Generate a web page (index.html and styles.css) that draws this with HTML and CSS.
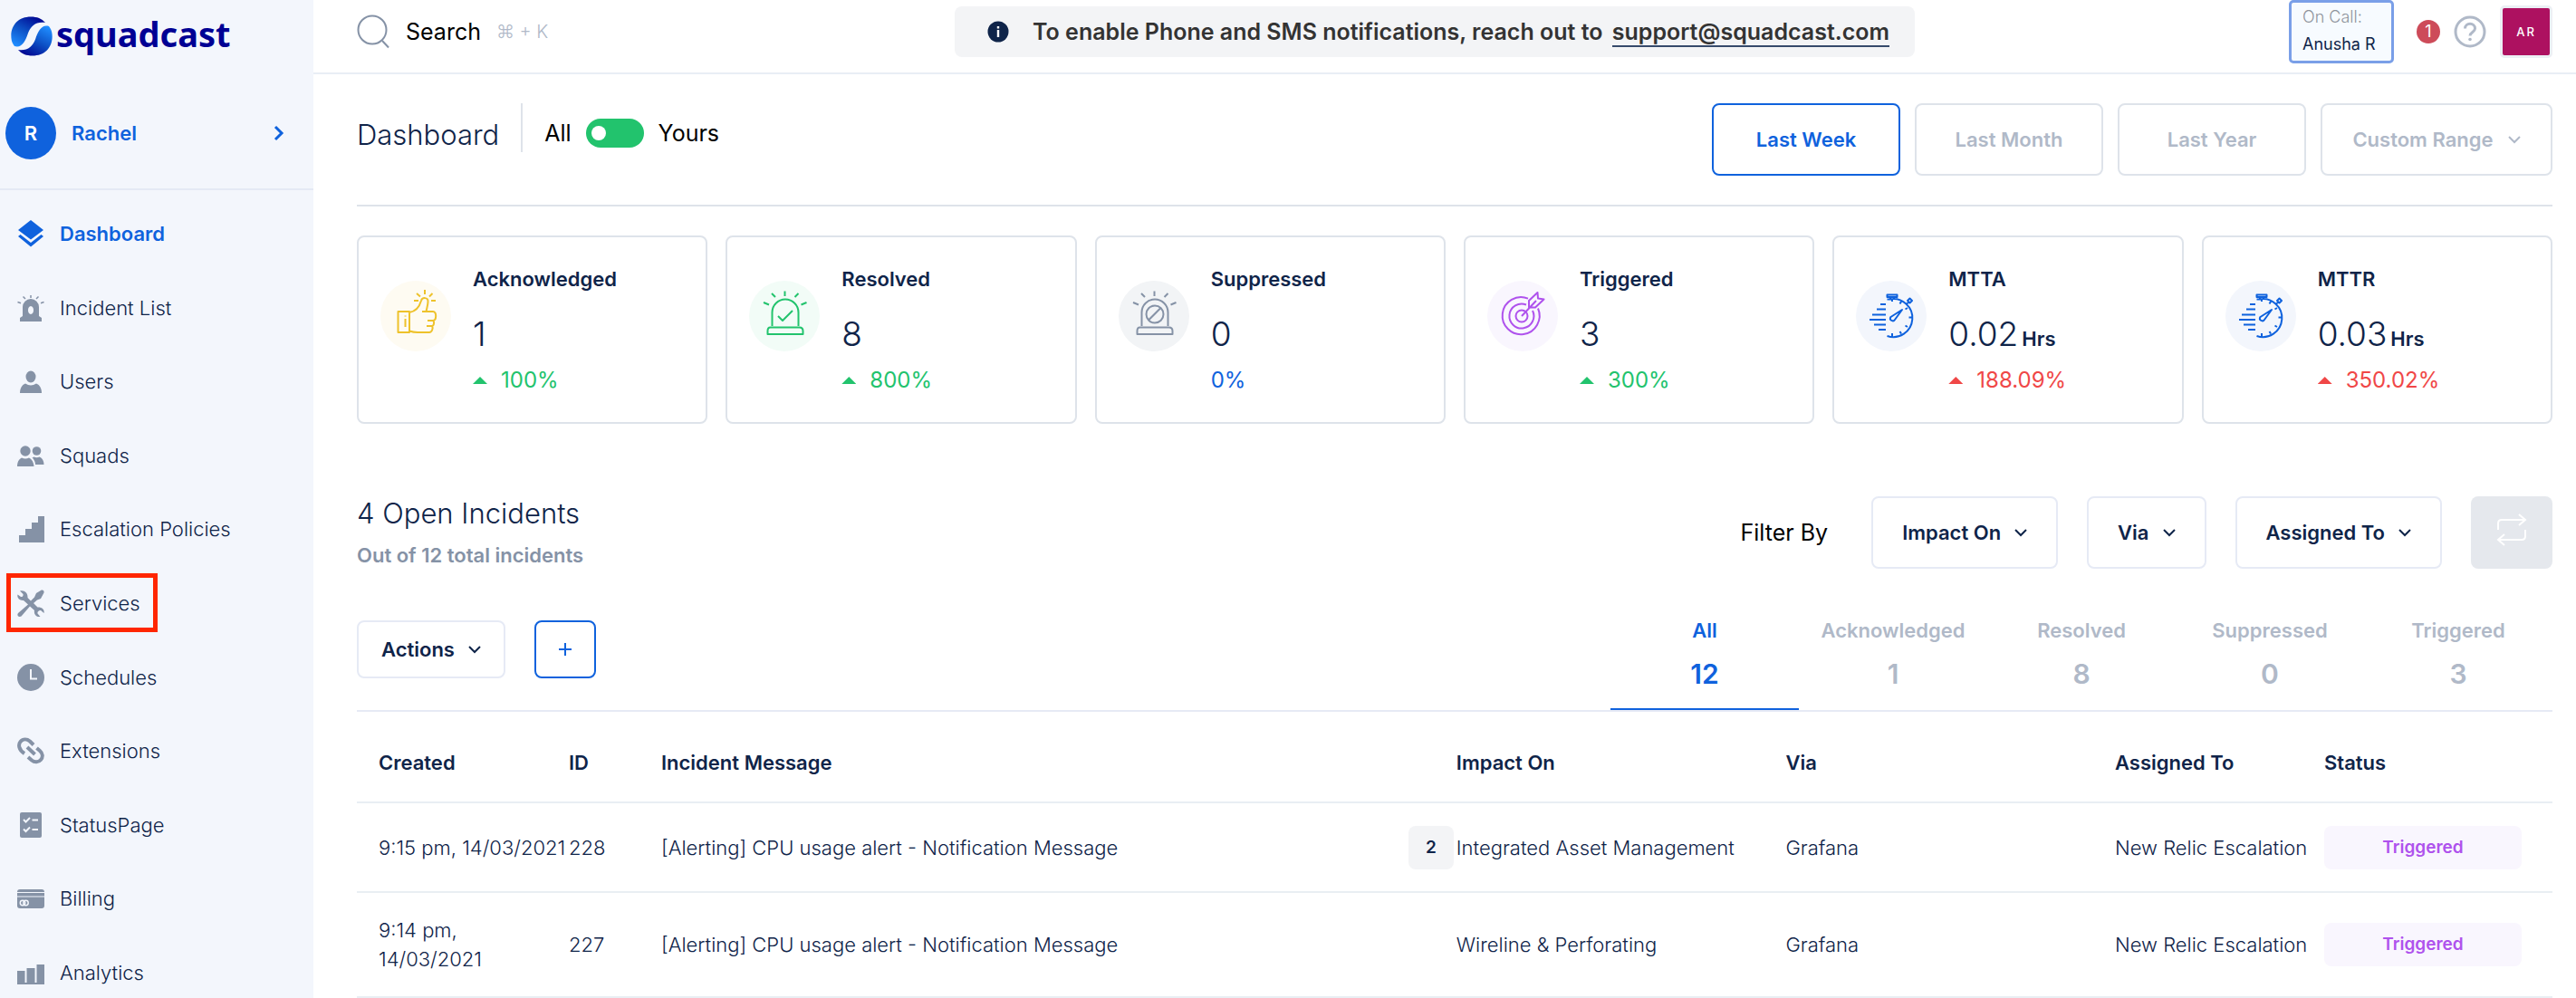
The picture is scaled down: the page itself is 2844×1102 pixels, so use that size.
FILE: index.html
```html
<!DOCTYPE html>
<html lang="en">
<head>
<meta charset="utf-8">
<meta name="viewport" content="width=device-width, initial-scale=1">
<title>Squadcast Dashboard</title>
<link rel="stylesheet" href="styles.css">
</head>
<body>
<svg class="sprite" aria-hidden="true">
  <symbol id="chevron-down" viewBox="0 0 14 10"><path d="M1 2l6 6 6-6" fill="none" stroke="currentColor" stroke-width="2"/></symbol>
  <symbol id="siren-rays" viewBox="0 0 78 78"><path d="M39.500 11.500V17M25 14l4 4M54.500 14l-4 4M16 24l6 2.500M63.500 24l-6 2.500M25.500 50V35a14.500 14.500 0 0 1 29 0v15M23.500 51.500h32q4 0 4 4V59h-39v-3.500q0-4 3-4z"/></symbol>
  <symbol id="stopwatch" viewBox="0 0 78 78"><path d="M34.500 20.500h3a21 21 0 1 1-3 40.500M34.500 15.500h11v2.500h-11zM38 18v2.500M42 18v2.500M40 20v3M50 23l-1.500 2.500M57 30l-2.500 1.500M62 40.500h-3.500M57 51l-2.500-1.500M50 58.500L48.500 56M40 61.500V58M56 25.500l2-1.500M59.500 19.500l2.500 2.500-2.500 2.500-2.500-2.500zM27 26h6M23 31.500h10M18 37.500h15M15 43h18M20 48.500h13M25 54h8M51 32l-8 11c-2 3-7 0-4.500-3z"/></symbol>
</svg>
<div class="app">
  <aside class="sidebar">
    <a class="brand" href="#">
      <svg width="46" height="44" viewBox="0 0 46 43" aria-hidden="true">
        <defs>
          <linearGradient id="ball" x1="0.8" y1="0" x2="0.2" y2="1"><stop offset="0" stop-color="#00038f"/><stop offset=".5" stop-color="#0c4fc4"/><stop offset="1" stop-color="#1f8dff"/></linearGradient>
        </defs>
        <path fill="url(#ball)" d="M.5 24C-1 10 8 0 22 0c7 0 12 2 16 6.500C28 5 22 10 19 18c-3 9-7 17-15 14.500C2 30 .7 27 .5 24z"/>
        <path fill="url(#ball)" transform="rotate(180 23 21.500)" d="M.5 24C-1 10 8 0 22 0c7 0 12 2 16 6.500C28 5 22 10 19 18c-3 9-7 17-15 14.500C2 30 .7 27 .5 24z"/>
      </svg>
      <span>squadcast</span>
    </a>
    <button class="profile" type="button">
      <span class="profile-avatar">R</span>
      <span class="profile-name">Rachel</span>
      <svg width="12" height="18" viewBox="0 0 12 18" aria-hidden="true"><path d="M2 2l7 7-7 7" fill="none" stroke="currentColor" stroke-width="3"/></svg>
    </button>
    <nav class="nav">
      <ul>
        <li><a class="is-active" href="#"><svg viewBox="0 0 30 30"><path d="M15 0l14 11-14 10.500L1 11zM1 18l2.500-2L15 25l11.500-9 2.500 2-14 11.500z"/></svg>Dashboard</a></li>
        <li><a href="#"><svg viewBox="0 0 30 30"><path fill-rule="evenodd" d="M3 30v-4l3-2V14a9 9 0 0 1 18 0v10l3 2v4zM15 13c-4 0-4 9 0 9s4-9 0-9z"/><path class="line" d="M15 1v3M6.500 2.500l2.500 2.500M23.500 2.500L21 5M.5 8.500l3.500 1.300M29.500 8.500L26 9.800"/></svg>Incident List</a></li>
        <li><a href="#"><svg viewBox="0 0 30 30"><ellipse cx="15" cy="10" rx="5.500" ry="6.500"/><path d="M3 28c0-5 2-9 6-10.500 4 2.500 8 2.500 12 0 4 1.500 6 5.500 6 10.500z"/></svg>Users</a></li>
        <li><a href="#"><svg viewBox="0 0 30 30"><circle cx="9" cy="10" r="5.700"/><circle cx="21.500" cy="10" r="4.800"/><path d="M0 27c0-5 2-8 5-9.500q4 2 8 0c3 1.500 5 4.500 5.500 9.500zM16.500 17.500l2-1q3 1.500 6 0c3 1 5 4.500 5 8.500H20c0-3-1.500-6-3.500-7.500z"/></svg>Squads</a></li>
        <li><a href="#"><svg viewBox="0 0 30 30"><path d="M2 30v-8h7v-7h7V8h7V1h7v29z"/></svg>Escalation Policies</a></li>
        <li class="is-marked"><a href="#"><svg viewBox="0 0 30 30"><path d="M3 1.500l3.500 3.500c.5 2-1 3.500-2.500 3L.5 5.500C-.5 9 2.500 12.500 7 12l5 4.500L1 26c-2 3 1 5 3.500 3.500L14 18.500l5 4.500c-1 4.500 2.500 8 6.500 7l-3-3.500c-.5-2 1.500-4 3.500-3.500l3.500 3c1-4-2.500-7-7-6.500L18 15l4-3.500 4-1.500 3.500-6.500C30 1 28 0 26 1l-5 3-2 4.500-4 4L11.500 9C12 4 8 0 3 1.500z"/></svg>Services</a></li>
        <li><a href="#"><svg viewBox="0 0 30 30"><circle cx="15" cy="15" r="15"/><path d="M15 6v10.500h7" fill="none" stroke="#f3f6fc" stroke-width="2"/></svg>Schedules</a></li>
        <li><a href="#"><svg viewBox="0 0 30 30"><path class="chain" d="M8 18C1.500 14 1 8 3.500 5c3-3.500 7.500-3 10.500-.5l4 4M11 11l8.500 8M12 22l4 3.500c3 2.500 7.500 2.500 10-.5s2.500-7-1-10l-3.500-3"/></svg>Extensions</a></li>
        <li><a href="#"><svg viewBox="0 0 30 30"><rect x="3" y="1" width="24" height="28" rx="2"/><path d="M7 9l2.500 2.500L14 7M16.500 9.500H23M7 19.500L9.500 22l4.500-4.500M16.500 20H23" fill="none" stroke="#f3f6fc" stroke-width="2"/></svg>StatusPage</a></li>
        <li><a href="#"><svg viewBox="0 0 30 30"><rect y="5" width="30" height="21" rx="3"/><path d="M0 8.500h30M0 13h30" stroke="#f3f6fc"/><g fill="none" stroke="#f3f6fc" stroke-width="1.500"><circle cx="6" cy="20" r="2.700"/><circle cx="9.500" cy="20" r="2.700"/></g></svg>Billing</a></li>
        <li><a href="#"><svg viewBox="0 0 30 30"><path d="M0 13h8.500v13h2V10h9v16h2V6H30v22H0z"/></svg>Analytics</a></li>
      </ul>
    </nav>
  </aside>

  <div class="page">
    <header class="topbar">
      <button class="search" type="button">
        <svg width="37" height="38" viewBox="0 0 37 38" aria-hidden="true"><circle cx="17" cy="17" r="15.500" fill="none" stroke="#8592a6" stroke-width="2"/><path d="M28 29l7 7.500" stroke="#8592a6" stroke-width="2"/></svg>
        <span>Search</span>
        <kbd>⌘ + K</kbd>
      </button>
      <div class="notice">
        <svg width="24" height="24" viewBox="0 0 24 24" aria-hidden="true"><circle cx="12" cy="12" r="11.500" fill="#0f2449"/><path d="M12 10v8M12 6v2.500" stroke="#fff" stroke-width="2.400"/></svg>
        <p>To enable Phone and SMS notifications, reach out to <a href="#">support@squadcast.com</a></p>
      </div>
      <div class="account">
        <div class="oncall"><span>On Call:</span><strong>Anusha R</strong></div>
        <span class="count">1</span>
        <button class="help" type="button" aria-label="Help"><svg width="36" height="36" viewBox="0 0 36 36" aria-hidden="true"><g fill="none" stroke="#b0b9c8" stroke-width="3"><circle cx="18" cy="18" r="16"/><path d="M12.500 14.500c0-7 11-7 11 0 0 4-5.500 4-5.500 8"/></g><circle cx="18" cy="26.500" r="1.800" fill="#b0b9c8"/></svg></button>
        <button class="user" type="button">AR</button>
      </div>
    </header>

    <main class="main">
      <section class="heading">
        <div class="heading-left">
          <h1>Dashboard</h1>
          <span class="rule"></span>
          <div class="scope"><span>All</span><input id="scope" class="switch" type="checkbox"><label for="scope">Yours</label></div>
        </div>
        <div class="ranges">
          <button class="range is-active" type="button">Last Week</button>
          <button class="range" type="button">Last Month</button>
          <button class="range" type="button">Last Year</button>
          <button class="range range-custom" type="button">Custom Range <svg class="chev"><use href="#chevron-down"/></svg></button>
        </div>
      </section>

      <section class="stats">
        <article class="stat">
          <svg class="stat-icon yellow" viewBox="0 0 78 78"><circle class="disc" cx="39" cy="39" r="39"/><path d="M49 10v5M40 14l4 3.500M57.500 14L54 17.500M37 22h5M56 22h5M19.500 34H32v23H19.500zM27.500 42v9M27.500 38.500v1M32 35c6-1 11-6 13-13 1-4 8-4 7.500 1 0 4-1.500 8-2 11M46 34h12c4.500 0 4 10 0 10h-6M58 44c2 1 1 6-1 6h-6M57 50c1.500 2 0 7-3 7H41c-4 0-6-.5-9-1.500"/></svg>
          <div><h2>Acknowledged</h2><p class="value">1</p><p class="trend good"><i></i>100%</p></div>
        </article>
        <article class="stat">
          <svg class="stat-icon green" viewBox="0 0 78 78"><circle class="disc" cx="39" cy="39" r="39"/><use href="#siren-rays"/><path d="M32 39l5 5 11-11"/></svg>
          <div><h2>Resolved</h2><p class="value">8</p><p class="trend good"><i></i>800%</p></div>
        </article>
        <article class="stat">
          <svg class="stat-icon grey" viewBox="0 0 78 78"><circle class="disc" cx="39" cy="39" r="39"/><use href="#siren-rays"/><circle cx="40" cy="37" r="9.500"/><path d="M33 43.500L46.500 30"/></svg>
          <div><h2>Suppressed</h2><p class="value">0</p><p class="trend flat">0%</p></div>
        </article>
        <article class="stat">
          <svg class="stat-icon purple" viewBox="0 0 78 78"><circle class="disc" cx="39" cy="39" r="39"/><circle cx="38" cy="39" r="6.500"/><path d="M45 19.700A20.500 20.500 0 1 0 56 30.500M43 26.500A13.500 13.500 0 1 0 50 33M38 39l16-17M46 29.500V22l9.500-9 .5 6.500 6.500 1L53 29.500z"/></svg>
          <div><h2>Triggered</h2><p class="value">3</p><p class="trend good"><i></i>300%</p></div>
        </article>
        <article class="stat">
          <svg class="stat-icon blue" viewBox="0 0 78 78"><circle class="disc" cx="39" cy="39" r="39"/><use href="#stopwatch"/></svg>
          <div><h2>MTTA</h2><p class="value">0.02<small>Hrs</small></p><p class="trend bad"><i></i>188.09%</p></div>
        </article>
        <article class="stat">
          <svg class="stat-icon blue" viewBox="0 0 78 78"><circle class="disc" cx="39" cy="39" r="39"/><use href="#stopwatch"/></svg>
          <div><h2>MTTR</h2><p class="value">0.03<small>Hrs</small></p><p class="trend bad"><i></i>350.02%</p></div>
        </article>
      </section>

      <section class="incidents">
        <div class="incidents-head">
          <div>
            <h2>4 Open Incidents</h2>
            <p>Out of 12 total incidents</p>
          </div>
          <div class="filters">
            <span>Filter By</span>
            <button class="filter" type="button">Impact On <svg class="chev"><use href="#chevron-down"/></svg></button>
            <button class="filter" type="button">Via <svg class="chev"><use href="#chevron-down"/></svg></button>
            <button class="filter" type="button">Assigned To <svg class="chev"><use href="#chevron-down"/></svg></button>
            <button class="reset" type="button" aria-label="Reset filters"><svg width="34" height="38" viewBox="0 0 34 38" aria-hidden="true"><path d="M2 19v-7q0-4 4-4h26M25 2l7 6-7 6M32 19v7q0 4-4 4H2M9 24l-7 6 7 6" fill="none" stroke="#fff" stroke-width="2"/></svg></button>
          </div>
        </div>

        <div class="toolbar">
          <div class="toolbar-left">
            <button class="actions" type="button">Actions <svg class="chev"><use href="#chevron-down"/></svg></button>
            <button class="add" type="button" aria-label="Add incident"><svg width="14" height="14" viewBox="0 0 14 14" aria-hidden="true"><path d="M7 0v14M0 7h14" stroke="currentColor" stroke-width="2"/></svg></button>
          </div>
          <div class="tabs" role="tablist">
            <button class="tab is-active" type="button" role="tab" aria-selected="true">All<b>12</b></button>
            <button class="tab" type="button" role="tab">Acknowledged<b>1</b></button>
            <button class="tab" type="button" role="tab">Resolved<b>8</b></button>
            <button class="tab" type="button" role="tab">Suppressed<b>0</b></button>
            <button class="tab" type="button" role="tab">Triggered<b>3</b></button>
          </div>
        </div>

        <table class="table">
          <colgroup><col class="col-created"><col class="col-id"><col><col class="col-count"><col class="col-impact"><col class="col-via"><col class="col-assigned"><col class="col-status"></colgroup>
          <thead>
            <tr><th>Created</th><th>ID</th><th colspan="2">Incident Message</th><th>Impact On</th><th>Via</th><th>Assigned To</th><th>Status</th></tr>
          </thead>
          <tbody>
            <tr><td>9:15 pm, 14/03/2021</td><td>228</td><td>[Alerting] CPU usage alert - Notification Message</td><td><span class="dupes">2</span></td><td>Integrated Asset Management</td><td>Grafana</td><td>New Relic Escalation</td><td><span class="pill">Triggered</span></td></tr>
            <tr><td>9:14 pm,<br>14/03/2021</td><td>227</td><td>[Alerting] CPU usage alert - Notification Message</td><td></td><td>Wireline &amp; Perforating</td><td>Grafana</td><td>New Relic Escalation</td><td><span class="pill">Triggered</span></td></tr>
          </tbody>
        </table>
      </section>
    </main>
  </div>
</div>
</body>
</html>
```
FILE: styles.css
```css
:root {
  --ink: #0f2449;
  --blue: #0f62dd;
  --slate: #8592a6;
  --mute: #b0b9c8;
  --line: #dee3ea;
  --soft-line: #e6eaf5;
}

*, *::before, *::after { box-sizing: border-box; }

body {
  margin: 0;
  background: #fff;
  color: var(--ink);
  font: 300 22px/32px Inter, "Liberation Sans", sans-serif;
}

h1, h2, p, ul { margin: 0; padding: 0; }
h1, h2 { font-weight: 600; font-size: 22px; }
ul { list-style: none; }
a { color: inherit; text-decoration: none; }

button {
  margin: 0;
  padding: 0;
  border: 0;
  background: none;
  color: inherit;
  font: inherit;
  cursor: pointer;
}

.sprite { position: absolute; width: 0; height: 0; }
.chev { width: 14px; height: 10px; flex: none; }

.app { display: flex; min-height: 100vh; }

/* Sidebar */
.sidebar {
  display: flex;
  flex: none;
  flex-direction: column;
  width: 346px;
  background: #f3f6fc;
}

.brand {
  display: flex;
  align-items: center;
  gap: 4px;
  height: 80px;
  padding: 0 12px;
  color: #000094;
  font: 700 38px/44px "Noto Sans", sans-serif;
}
.brand span { padding-bottom: 6px; }

.profile {
  display: flex;
  align-items: center;
  gap: 17px;
  height: 130px;
  padding: 6px 32px 0 6px;
  border-bottom: 2px solid #e4e9f5;
  color: var(--blue);
  font-weight: 600;
  text-align: left;
}
.profile-avatar {
  width: 56px;
  height: 58px;
  border-radius: 50%;
  background: var(--blue);
  color: #fff;
  line-height: 58px;
  text-align: center;
}
.profile-name { flex: 1; }

.nav { display: flex; flex: 1; padding-top: 20px; }
.nav ul { display: flex; flex: 1; flex-direction: column; justify-content: space-between; }
.nav li { position: relative; }
.nav a {
  display: flex;
  align-items: center;
  gap: 17px;
  height: 56px;
  padding-left: 19px;
}
.nav svg { width: 30px; height: 30px; fill: var(--slate); }
.nav .line { fill: none; stroke: var(--slate); stroke-width: 1.5; }
.nav .chain { fill: none; stroke: var(--slate); stroke-width: 4; }
.nav .is-active { color: var(--blue); font-weight: 600; }
.nav .is-active svg { fill: var(--blue); }
.nav .is-marked::after {
  content: "";
  position: absolute;
  top: -5px;
  left: 7px;
  width: 167px;
  height: 65px;
  border: 5px solid #ff2600;
}

/* Top bar */
.page { flex: 1; min-width: 0; }
.topbar {
  display: grid;
  grid-template-columns: 1fr auto 704px;
  align-items: center;
  height: 82px;
  padding: 0 26px 12px 48px;
  border-bottom: 2px solid #e9eef5;
}
.search { display: flex; align-items: center; gap: 17px; justify-self: start; color: #000; font-size: 25px; font-weight: 400; }
.search kbd { color: var(--mute); font: 300 20px/32px Inter, "DejaVu Sans", sans-serif; }

.notice {
  display: flex;
  align-items: center;
  gap: 26px;
  height: 56px;
  padding: 0 28px 0 36px;
  border-radius: 8px;
  background: #f3f4f6;
  color: #333;
  font-size: 25px;
  font-weight: 600;
}
.notice a { margin-left: 4px; border-bottom: 2px solid #364a6b; }

.account { display: flex; align-items: center; justify-content: flex-end; gap: 15px; }
.oncall {
  display: flex;
  flex-direction: column;
  gap: 6px;
  width: 116px;
  height: 70px;
  margin-right: 10px;
  padding: 4px 0 0 12px;
  border: 3px solid #7a9fe8;
  border-radius: 5px;
  background: #f7fbff;
  font-size: 18px;
  line-height: 24px;
}
.oncall span { color: #8f949c; }
.oncall strong { font-weight: 400; }
.count { width: 26px; height: 26px; border-radius: 50%; background: #cd4b59; color: #fff; font-size: 18px; font-weight: 400; line-height: 26px; text-align: center; }
.help { display: flex; }
.user {
  width: 58px;
  height: 58px;
  border: 3px solid #eceff4;
  border-radius: 5px;
  background: #ad1160;
  color: #fff;
  font-size: 13px;
  font-weight: 500;
  letter-spacing: 2px;
}

/* Page heading */
.main { padding: 32px 26px 0 48px; }
.heading { display: flex; align-items: flex-start; justify-content: space-between; padding-bottom: 32px; border-bottom: 2px solid var(--line); }
.heading-left { display: flex; align-items: center; gap: 24px; height: 66px; }
.heading h1 { padding-top: 4px; font-size: 31px; font-weight: 300; }
.rule { align-self: flex-start; width: 2px; height: 54px; background: var(--line); }
.scope { display: flex; align-items: center; gap: 16px; color: #000; font-size: 25px; font-weight: 400; }
.switch { appearance: none; width: 64px; height: 32px; margin: 0; padding: 8px 6px; border-radius: 16px; background: #22c36d; }
.switch::before { content: ""; display: block; width: 16px; height: 16px; border-radius: 50%; background: #fff; }

.ranges { display: flex; gap: 16px; }
.range {
  display: flex;
  align-items: center;
  justify-content: center;
  gap: 16px;
  width: 208px;
  height: 80px;
  border: 2px solid var(--line);
  border-radius: 8px;
  color: var(--mute);
  font-weight: 600;
}
.range.is-active { border-color: var(--blue); color: var(--blue); }
.range-custom { width: 256px; }

/* Statistic cards */
.stats { display: grid; grid-template-columns: repeat(6, 1fr); gap: 20px; margin-top: 32px; }
.stat { display: flex; align-items: flex-start; gap: 24px; padding: 30px 24px; border: 2px solid var(--line); border-radius: 8px; }
.stat-icon { flex: none; width: 78px; height: 78px; margin-top: 18px; fill: none; stroke: currentColor; stroke-width: 2; stroke-linejoin: round; }
.disc { stroke: none; }
.yellow { color: #eec22b; }
.yellow .disc { fill: #fefbf2; }
.green { color: #22c36d; }
.green .disc { fill: #f2fcf7; }
.grey { color: var(--slate); }
.grey .disc { fill: #f2f4f6; }
.purple { color: #af52ed; }
.purple .disc { fill: #f9f6fe; }
.blue { color: var(--blue); }
.blue .disc { fill: #f3f6fc; }
.value { display: flex; align-items: baseline; gap: 4px; height: 44px; margin: 23px 0 13px; font-size: 37px; line-height: 44px; }
.value small { font-size: 22px; font-weight: 600; line-height: 32px; }
.trend { display: flex; align-items: center; gap: 15px; font-size: 24px; font-weight: 400; }
.trend i { width: 16px; height: 8px; background: currentColor; clip-path: polygon(50% 0, 100% 100%, 0 100%); }
.good { color: #22c36d; }
.bad { color: #f04747; }
.flat { color: var(--blue); }

/* Incidents */
.incidents { margin-top: 80px; }
.incidents-head { display: flex; align-items: flex-start; justify-content: space-between; }
.incidents-head h2 { margin-bottom: 12px; font-size: 31px; font-weight: 300; line-height: 38px; }
.incidents-head p { color: var(--slate); font-weight: 600; line-height: 30px; }
.filters { display: flex; align-items: center; gap: 32px; }
.filters > span { margin-right: 16px; color: #000; font-size: 25px; font-weight: 400; }
.filter, .actions {
  display: flex;
  align-items: center;
  gap: 15px;
  height: 80px;
  padding: 0 32px;
  border: 2px solid var(--soft-line);
  border-radius: 8px;
  font-weight: 600;
}
.reset { display: flex; align-items: center; justify-content: center; width: 90px; height: 80px; padding-bottom: 6px; border-radius: 8px; background: #e5e8ed; }

.toolbar { display: flex; justify-content: space-between; margin-top: 52px; border-bottom: 2px solid var(--soft-line); }
.toolbar-left { display: flex; align-items: flex-start; gap: 32px; padding-top: 5px; }
.actions { height: 64px; padding: 0 25px; }
.add { display: flex; align-items: center; justify-content: center; width: 68px; height: 64px; border: 2px solid var(--blue); border-radius: 8px; color: var(--blue); }
.tabs { display: flex; }
.tab { display: flex; flex-direction: column; align-items: center; gap: 12px; width: 208px; padding-bottom: 18px; border-bottom: 2px solid transparent; color: var(--mute); font-weight: 600; }
.tab b { font-size: 30px; font-weight: 600; line-height: 40px; }
.tab.is-active { border-color: var(--blue); color: var(--blue); }

.table { width: 100%; border-collapse: collapse; table-layout: fixed; }
.col-created { width: 234px; }
.col-id { width: 102px; }
.col-count { width: 53px; }
.col-impact, .col-via { width: 15%; }
.col-assigned { width: 231px; }
.col-status { width: 252px; }
.table th, .table td { padding: 0; border-bottom: 2px solid #e9eef3; text-align: left; white-space: nowrap; }
.table th { height: 100px; padding-top: 12px; font-weight: 600; }
.table td { height: 99px; }
.table tbody tr:last-child td { height: 116px; }
.table th:first-child, .table td:first-child { padding-left: 24px; }
.dupes, .pill { display: block; height: 48px; border-radius: 8px; line-height: 48px; text-align: center; font-size: 19px; font-weight: 600; }
.dupes { width: 50px; background: #f3f4f6; }
.pill { width: 218px; background: #f9f6fe; color: #af52ed; }
```
